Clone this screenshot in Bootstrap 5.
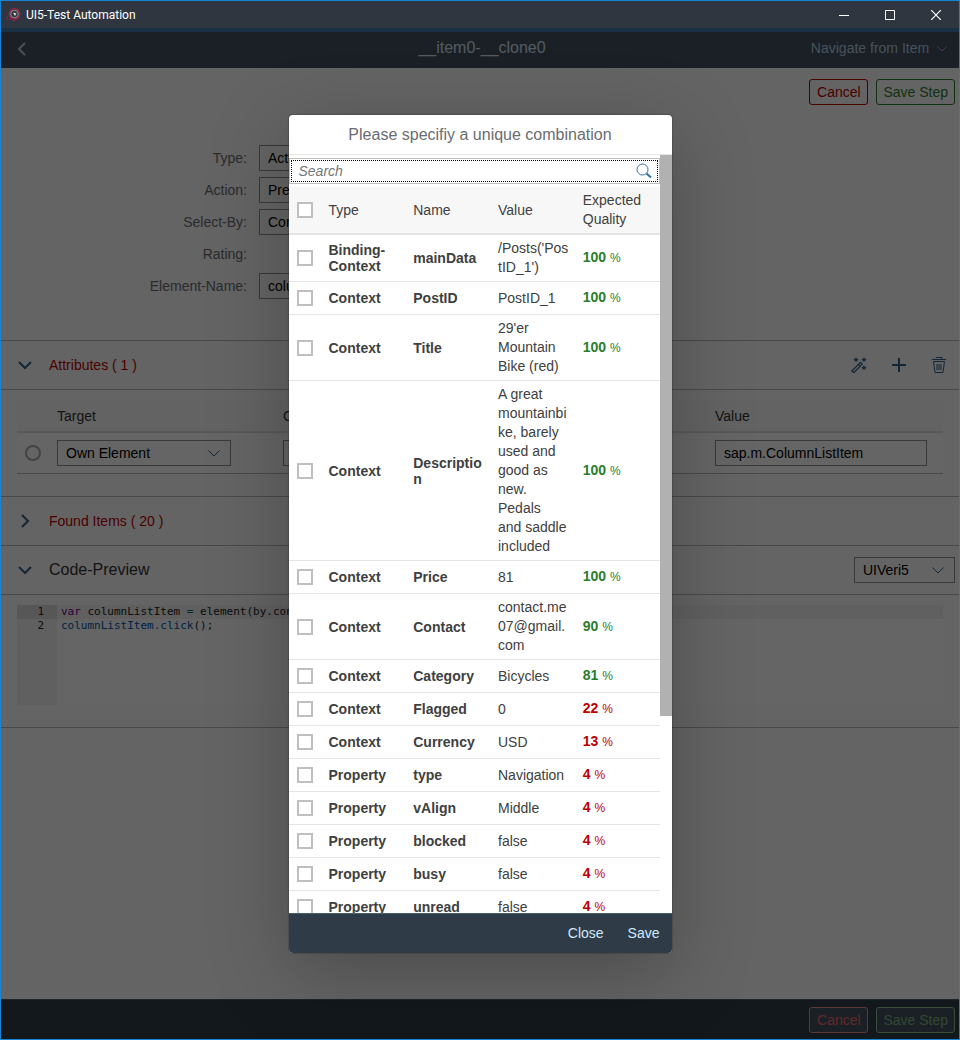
<!DOCTYPE html>
<html lang="en">
<head>
<meta charset="utf-8">
<meta name="viewport" content="width=device-width, initial-scale=1">
<title>UI5-Test Automation</title>
<link rel="stylesheet" href="https://cdn.jsdelivr.net/npm/bootstrap@5.3.0/dist/css/bootstrap.min.css">
<style>
  body { font: 14px/16px "Liberation Sans", Arial, sans-serif; color: #333; background: #fafafa; }
  .window { height: 100vh; border: 1px solid #1883d7; }
  .titlebar { height: 27px; background: #2f3640; color: #fff; font: 12px/16px Roboto, sans-serif; }
  .titlebar button { width: 46px; height: 27px; border: 0; background: none; color: #fff; padding: 0; }
  .app { background: #fafafa; min-height: 0; }
  .shellbar { height: 40px; border-top: 4px solid #427cac; background: #41515f; color: #d1e0ee; padding: 0 12px 4px 16px; }
  .shellbar button { border: 0; background: none; color: #b4cbe0; padding: 0; }
  .shellbar > div { flex: 1 1 0; }
  .shellbar h1 { font-size: 16px; line-height: 20px; color: #d1e0ee; }
  .action { height: 26px; min-width: 59px; padding: 0 6px; font-size: 14px; line-height: 24px; border-radius: 3px; border: 1px solid; background: none; }
  .act-red { color: #b00; border-color: #b00; }
  .act-green { color: #2b7d2b; border-color: #2b7d2b; }
  .top-actions { padding: 11px 4px 0 0; }
  .form-grid { display: grid; grid-template-columns: 258px minmax(0, 392px); row-gap: 6px; padding: 40px 0 41px; }
  .form-grid label, .form-grid .lab { color: #6a6d70; text-align: right; padding-right: 12px; line-height: 26px; min-height: 26px; }
  .field { height: 26px; width: 100%; border: 1px solid #89919a; background: none; border-radius: 0; color: #000; padding: 0 8px; font-size: 14px; appearance: none; }
  .pick { position: relative; }
  .pick svg { position: absolute; right: 11px; top: 10px; pointer-events: none; }
  .pick-target { width: 174px; }
  .pick-format { width: 101px; }
  .sect { border-top: 1px solid #b5b5b5; }
  .sect-head { height: 48px; padding: 0 12px 0 14px; gap: 14px; }
  .sect-head h2 { font-size: 14px; line-height: 20px; margin: 0; }
  .sect-head h2.big { font-size: 16px; }
  .sect-head button { border: 0; background: none; padding: 0; color: #346187; line-height: 1; }
  .sect-body { padding: 10px 16px 22px; }
  .red { color: #b00; }
  .attrs { table-layout: fixed; width: 100%; }
  .attrs th { font-weight: 400; height: 32px; padding: 0 8px; border-bottom: 2px solid #dcdcdc; background: #f7f7f7; }
  .attrs td { height: 41px; padding: 0 8px; border-bottom: 1px solid #b5b5b5; background: #fcfcfc; }
  .dot { appearance: none; width: 16px; height: 16px; border: 2px solid #a8a8a8; border-radius: 50%; display: block; margin: 0; }
  .code { min-height: 100px; background: #fdfdfd; font: 11px/14px "DejaVu Sans Mono", monospace; color: #222; }
  .gutter { width: 40px; background: #f0f0f0; text-align: right; }
  .gutter div { padding-right: 13px; }
  .gutter .now { background: #dadada; }
  .lines div { padding-left: 4px; white-space: pre; }
  .lines .now { background: #efefef; }
  .bottom { height: 40px; background: #2f3c48; border-top: 1px solid #485a69; padding-right: 4px; }
  .bottom .action { background: #435260; }
  .bottom .act-red { color: #e66; border-color: #e88; }
  .bottom .act-green { color: #7db37d; border-color: #8fc08f; }
  .shade { background: rgba(0, 0, 0, .6); z-index: 5; padding-top: 1px; }
  .dialog { width: 383px; height: calc(100% - 172px); border-radius: 4px; background: #fff; box-shadow: 0 0 1px 1px rgba(0,0,0,.15), 0 20px 80px rgba(0,0,0,.25); overflow: hidden; }
  .dialog h2 { font-size: 16px; line-height: 20px; height: 40px; padding: 10px 0 9px; margin: 0; color: #6a6d70; text-align: center; border-bottom: 1px solid #e5e5e5; flex: none; }
  .search { margin-top: 3px; height: 26px; border: 1px solid #bfbfbf; padding: 1px; position: relative; }
  .search input { display: block; width: 100%; height: 22px; border: 1px dotted #000; padding: 0 7px; font-size: 14px; font-style: italic; outline: 0; border-radius: 0; }
  .search input::placeholder { color: #74777a; opacity: 1; }
  .search button { position: absolute; right: 7px; top: 4px; border: 0; background: none; padding: 0; line-height: 1; }
  .scroll { overflow: auto; scrollbar-width: none; }
  .scroll::-webkit-scrollbar { display: none; }
  .track { width: 12px; background: #fff; }
  .thumb { height: 74%; background: #b1b1b1; }
  .ctx { table-layout: fixed; width: 100%; margin-top: 3px; color: #404040; }
  .ctx th, .ctx td { padding: 4px 8px; vertical-align: middle; border-bottom: 1px solid #e5e5e5; }
  .ctx td { height: 33px; line-height: 19px; overflow-wrap: anywhere; }
  .ctx td:nth-child(4) { padding-right: 6px; }
  .ctx td b { display: block; line-height: 16px; }
  .ctx th { font-weight: 400; height: 47px; background: #f7f7f7; line-height: 19px; border-bottom: 2px solid #e5e5e5; }
  .tick { appearance: none; display: block; width: 16px; height: 16px; border: 2px solid #bfbfbf; background: #fff; margin: 0; }
  .good { color: #2b7d2b; } .poor { color: #b00; }
  .num { font-weight: 700; } .unit { font-size: 12px; }
  .dialog footer { height: 40px; background: #2f3c48; border-top: 1px solid #4a5f70; flex: none; gap: 24px; padding: 0 12px 1px 0; }
  .dialog footer button { border: 0; background: none; color: #d1e8ff; padding: 0; }
</style>
</head>
<body>
<div class="window d-flex flex-column">
  <header class="titlebar d-flex align-items-center flex-shrink-0">
    <svg class="ms-1 me-1" width="17" height="18" viewBox="0 0 17 18" fill="none"><circle cx="9.500" cy="8" r="5.200" fill="#30363c" stroke="#9b2348" stroke-width="1.600"/><circle cx="9.500" cy="8" r="3.800" stroke="#8b8f90"/><path d="M8 6.500l3.500 1-1.500 2.500z" fill="#ddd"/><path d="M1 13l2-1M4 14l2-1M8 15l2-1M2 10l1 1" stroke="#9b2348"/></svg>
    <span>UI5-Test Automation</span>
    <div class="ms-auto d-flex">
      <button type="button" aria-label="Minimize"><svg width="10" height="10" stroke="currentColor"><path d="M0 5.500h10"/></svg></button>
      <button type="button" aria-label="Maximize"><svg width="10" height="10" fill="none" stroke="currentColor"><path d="M.5.500h9v9h-9z"/></svg></button>
      <button type="button" aria-label="Close window"><svg width="10" height="10" stroke="currentColor" stroke-width="1.200"><path d="M0 0l10 10M10 0L0 10"/></svg></button>
    </div>
  </header>

  <div class="app position-relative flex-grow-1 d-flex flex-column">
    <div class="shellbar d-flex align-items-center flex-shrink-0">
      <div><button type="button" class="d-block" aria-label="Back"><svg width="10" height="14" viewBox="0 0 10 14" fill="none" stroke="currentColor" stroke-width="2"><path d="M8 1L2 7l6 6"/></svg></button></div>
      <h1 class="m-0 text-center fw-normal">__item0-__clone0</h1>
      <div class="text-end"><button type="button">Navigate from Item <svg class="ms-1" width="10" height="6" fill="none" stroke="#b48cf0"><path d="M.5.500L5 5l4.500-4.500"/></svg></button></div>
    </div>

    <main class="flex-grow-1 overflow-hidden">
      <div class="top-actions d-flex justify-content-end gap-2">
        <button type="button" class="action act-red">Cancel</button>
        <button type="button" class="action act-green">Save Step</button>
      </div>
      <form class="form-grid">
        <label for="f1">Type:</label><select id="f1" class="field"><option>Action</option></select>
        <label for="f2">Action:</label><select id="f2" class="field"><option>Press</option></select>
        <label for="f3">Select-By:</label><select id="f3" class="field"><option>Context</option></select>
        <span class="lab">Rating:</span><span></span>
        <label for="f5">Element-Name:</label><input id="f5" class="field" value="columnListItem">
      </form>

      <section class="sect">
        <div class="sect-head d-flex align-items-center">
          <button type="button" aria-label="Collapse attributes"><svg width="20" height="20" fill="none" stroke="currentColor" stroke-width="2"><path d="M4 7l6 6 6-6"/></svg></button>
          <h2 class="red fw-normal">Attributes ( 1 )</h2>
          <div class="ms-auto d-flex gap-4">
            <button type="button" aria-label="Generate"><svg width="16" height="16" fill="none" stroke="currentColor"><path stroke-width="1.300" d="M.8 14l8.700-8.700 1.800 1.800-8.700 8.700zM7.500 7.300l1.800 1.800"/><path fill="currentColor" stroke="none" d="M5 0l.8 1.700 1.900.2-1.400 1.300.4 1.900L5 4.100l-1.700 1 .4-1.900-1.400-1.300 1.900-.2zM13 0l.8 1.700 1.900.2-1.400 1.300.4 1.900-1.700-1-1.700 1 .4-1.900-1.400-1.300 1.900-.2zM13 8l.8 1.700 1.900.2-1.400 1.300.4 1.900-1.700-1-1.700 1 .4-1.900-1.400-1.300 1.900-.2z"/></svg></button>
            <button type="button" aria-label="Add"><svg width="16" height="16" stroke="currentColor" stroke-width="2"><path d="M1 8h14M8 1v14"/></svg></button>
            <button type="button" aria-label="Delete"><svg width="16" height="16" fill="none" stroke="currentColor"><path d="M1 2.500h14M5 .5h6v2M2.500 4.500L4 15.500h8l1.500-11zM6 7v6M8 7v6M10 7v6"/></svg></button>
          </div>
        </div>
        <div class="sect sect-body">
          <table class="attrs">
            <colgroup><col style="width:32px"><col style="width:226px"><col><col><col style="width:236px"></colgroup>
            <thead><tr><th></th><th>Target</th><th>Condition</th><th></th><th>Value</th></tr></thead>
            <tbody><tr>
              <td><input type="radio" class="dot" aria-label="Select attribute"></td>
              <td><div class="pick pick-target"><select class="field" aria-label="Target"><option>Own Element</option></select><svg width="12" height="7" fill="none" stroke="#346187"><path d="M.5.500L6 6l5.500-5.500"/></svg></div></td>
              <td><select class="field" aria-label="Condition"><option></option></select></td><td></td>
              <td><div class="pe-2"><input class="field" aria-label="Value" value="sap.m.ColumnListItem"></div></td>
            </tr></tbody>
          </table>
        </div>
      </section>
      <section class="sect">
        <div class="sect-head d-flex align-items-center">
          <button type="button" aria-label="Expand found items"><svg width="20" height="20" fill="none" stroke="currentColor" stroke-width="2"><path d="M7 4l6 6-6 6"/></svg></button>
          <h2 class="red fw-normal">Found Items ( 20 )</h2>
        </div>
      </section>
      <section class="sect">
        <div class="sect-head d-flex align-items-center pe-1">
          <button type="button" aria-label="Collapse code preview"><svg width="20" height="20" fill="none" stroke="currentColor" stroke-width="2"><path d="M4 7l6 6 6-6"/></svg></button>
          <h2 class="big fw-normal">Code-Preview</h2>
          <div class="pick pick-format ms-auto"><select class="field" aria-label="Code format"><option>UIVeri5</option></select><svg width="12" height="7" fill="none" stroke="#346187"><path d="M.5.500L6 6l5.500-5.500"/></svg></div>
        </div>
        <div class="sect sect-body">
          <div class="code d-flex">
            <div class="gutter flex-shrink-0"><div class="now">1</div><div>2</div></div>
            <div class="lines flex-grow-1 overflow-hidden"><div class="now"><span style="color:#708">var</span> columnListItem <span style="color:#066">=</span> element(by.control({</div><div><span style="color:#05a">columnListItem.click</span>();</div></div>
          </div>
        </div>
      </section>
      <div class="sect"></div>
    </main>

    <div class="bottom d-flex align-items-center justify-content-end gap-2 flex-shrink-0">
      <button type="button" class="action act-red">Cancel</button>
      <button type="button" class="action act-green">Save Step</button>
    </div>

    <div class="shade position-absolute top-0 start-0 w-100 h-100 d-flex align-items-center justify-content-center">
      <div class="dialog d-flex flex-column" role="dialog" aria-modal="true" aria-labelledby="dlg">
        <h2 id="dlg" class="fw-normal">Please specifiy a unique combination</h2>
        <div class="d-flex flex-grow-1" style="min-height:0">
          <div class="scroll flex-grow-1">
            <form class="search"><input type="text" placeholder="Search" aria-label="Search"><button type="button" aria-label="Start search"><svg width="16" height="16" fill="none" stroke="#2f6fa8"><circle cx="6.500" cy="6.500" r="5.500"/><path d="M10.500 10.500l4.500 4" stroke-width="2"/></svg></button></form>
            <table class="ctx">
              <colgroup><col style="width:32px"><col><col><col><col></colgroup>
              <thead><tr><th><input type="checkbox" class="tick" aria-label="Select all"></th><th>Type</th><th>Name</th><th>Value</th><th>Expected Quality</th></tr></thead>
              <tbody id="rows"></tbody>
            </table>
          </div>
          <div class="track flex-shrink-0"><div class="thumb"></div></div>
        </div>
        <footer class="d-flex align-items-center justify-content-end">
          <button type="button">Close</button><button type="button">Save</button>
        </footer>
      </div>
    </div>
  </div>
</div>
<script src="https://cdn.jsdelivr.net/npm/bootstrap@5.3.0/dist/js/bootstrap.bundle.min.js"></script>
<script>
  const items = [
    ['Binding-Context', 'mainData', "/Posts('PostID_1')", 100],
    ['Context', 'PostID', 'PostID_1', 100],
    ['Context', 'Title', "29'er Mountain Bike (red)", 100],
    ['Context', 'Description', 'A great mountainbike, barely used and good as new. Pedals and&nbsp;saddle included', 100],
    ['Context', 'Price', '81', 100],
    ['Context', 'Contact', 'contact.me07@gmail.com', 90],
    ['Context', 'Category', 'Bicycles', 81],
    ['Context', 'Flagged', '0', 22],
    ['Context', 'Currency', 'USD', 13],
    ['Property', 'type', 'Navigation', 4],
    ['Property', 'vAlign', 'Middle', 4],
    ['Property', 'blocked', 'false', 4],
    ['Property', 'busy', 'false', 4],
    ['Property', 'unread', 'false', 4]
  ];
  document.getElementById('rows').innerHTML = items.map(([type, name, value, q]) =>
    `<tr><td><input type="checkbox" class="tick" aria-label="${name}"></td><td><b>${type}</b></td><td><b>${name}</b></td><td>${value}</td>
     <td class="${q > 50 ? 'good' : 'poor'}"><span class="num">${q}</span> <span class="unit">%</span></td></tr>`).join('');
</script>
</body>
</html>
